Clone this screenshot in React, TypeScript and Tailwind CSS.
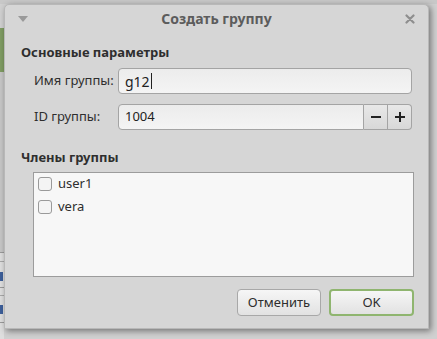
import React from "react";

function Checkbox() {
  return <span className="inline-block w-[14px] h-[14px] rounded-[3px] border border-[#9a9a9a] bg-[#f4f4f4] shrink-0" />;
}

export default function App() {
  return (
    <div
      className="w-[437px] h-[339px] relative overflow-hidden bg-[#d0d0d0]"
      style={{ fontFamily: '"Noto Sans", sans-serif' }}
    >
      {/* desktop fragments behind the dialog */}
      <div className="absolute left-0 top-0 w-[437px] h-[4px] bg-[#c8c8c8]" />
      <div className="absolute left-0 top-[28px] w-[4px] h-[44px] bg-[#7f9c63]" />
      <div className="absolute left-0 top-[72px] w-[4px] h-[180px] bg-[#c6c6c6]" />
      <div className="absolute left-0 top-[252px] w-[4px] h-[1px] bg-[#9a9a9a]" />
      <div className="absolute left-0 top-[253px] w-[4px] h-[86px] bg-[#dedede]" />
      <div className="absolute left-0 top-[261px] w-[4px] h-[1px] bg-[#a8a8a8]" />
      <div className="absolute left-0 top-[272px] w-[3px] h-[9px] bg-[#3d5f9a]" />
      <div className="absolute left-0 top-[287px] w-[4px] h-[1px] bg-[#9a9a9a]" />
      <div className="absolute left-0 top-[295px] w-[4px] h-[1px] bg-[#a8a8a8]" />
      <div className="absolute left-0 top-[305px] w-[3px] h-[9px] bg-[#3d5f9a]" />
      <div className="absolute left-0 top-[322px] w-[4px] h-[1px] bg-[#9a9a9a]" />

      {/* dialog window */}
      <div className="absolute left-[4px] top-[4px] w-[425px] h-[325px] bg-[#d6d6d6] rounded-t-[5px] border border-[#b8b8b8] shadow-[2px_2px_6px_rgba(0,0,0,0.45)] flex flex-col text-[13px] text-[#2e2e2e]">
        {/* title bar */}
        <div className="h-[28px] flex items-center px-[12px] relative">
          <svg width="10" height="6" viewBox="0 0 10 6" className="ml-[1px]">
            <path d="M0 0 L10 0 L5 6 Z" fill="#9a9a9a" />
          </svg>
          <div className="flex-1 text-center text-[14px] font-bold text-[#5c5c5c] -mt-[1px]">Создать группу</div>
          <svg width="10" height="10" viewBox="0 0 10 10" className="mr-[1px]">
            <path d="M1.5 1.5 L8.5 8.5 M8.5 1.5 L1.5 8.5" stroke="#8e8e8e" strokeWidth="2.2" strokeLinecap="round" />
          </svg>
        </div>

        <div className="flex flex-col pl-[16px] pr-[16px]">
          <div className="font-bold mt-[10px] leading-[18px]">Основные параметры</div>

          <div className="flex items-center mt-[7px]">
            <div className="w-[97px] pl-[13px]">Имя группы:</div>
            <div className="flex-1 h-[26px] rounded-[4px] border border-[#a4a4a4] bg-gradient-to-b from-[#ececec] to-[#f4f4f4] flex items-center px-[6px] text-[14px] text-[#222]">
              g12<span className="inline-block w-[1px] h-[16px] bg-[#222] ml-[1px]" />
            </div>
          </div>

          <div className="flex items-center mt-[10px]">
            <div className="w-[97px] pl-[13px]">ID группы:</div>
            <div className="flex-1 h-[26px] flex">
              <div className="flex-1 rounded-l-[4px] border border-[#a4a4a4] bg-gradient-to-b from-[#ececec] to-[#f4f4f4] flex items-center px-[6px] text-[13px] text-[#222]">
                1004
              </div>
              <div className="w-[24px] border-y border-r border-[#a4a4a4] bg-gradient-to-b from-[#e8e8e8] to-[#d8d8d8] flex items-center justify-center">
                <span className="block w-[10px] h-[2px] bg-[#222]" />
              </div>
              <div className="w-[24px] rounded-r-[4px] border-y border-r border-[#a4a4a4] bg-gradient-to-b from-[#e8e8e8] to-[#d8d8d8] flex items-center justify-center relative">
                <span className="block w-[10px] h-[2px] bg-[#222]" />
                <span className="absolute w-[2px] h-[10px] bg-[#222]" />
              </div>
            </div>
          </div>

          <div className="font-bold mt-[18px] leading-[18px]">Члены группы</div>

          <div className="ml-[12px] mr-[-2px] mt-[6px] h-[105px] bg-[#f7f7f7] border border-[#9c9c9c] flex flex-col pt-[3px] pl-[4px] gap-[7px]">
            <div className="flex items-center gap-[6px] h-[16px]">
              <Checkbox />
              <span className="text-[#2e2e2e]">user1</span>
            </div>
            <div className="flex items-center gap-[6px] h-[16px]">
              <Checkbox />
              <span className="text-[#2e2e2e]">vera</span>
            </div>
          </div>

          <div className="flex justify-end gap-[8px] mt-[12px] mr-[-2px]">
            <div className="w-[84px] h-[27px] rounded-[4px] border border-[#a8a8a8] bg-gradient-to-b from-[#f6f6f6] to-[#e2e2e2] flex items-center justify-center text-[#2e2e2e]">
              Отменить
            </div>
            <div className="w-[85px] h-[27px] rounded-[4px] border-2 border-[#8fb56f] bg-gradient-to-b from-[#f6f6f6] to-[#e2e2e2] flex items-center justify-center text-[#2e2e2e]">
              OK
            </div>
          </div>
        </div>
      </div>
    </div>
  );
}
